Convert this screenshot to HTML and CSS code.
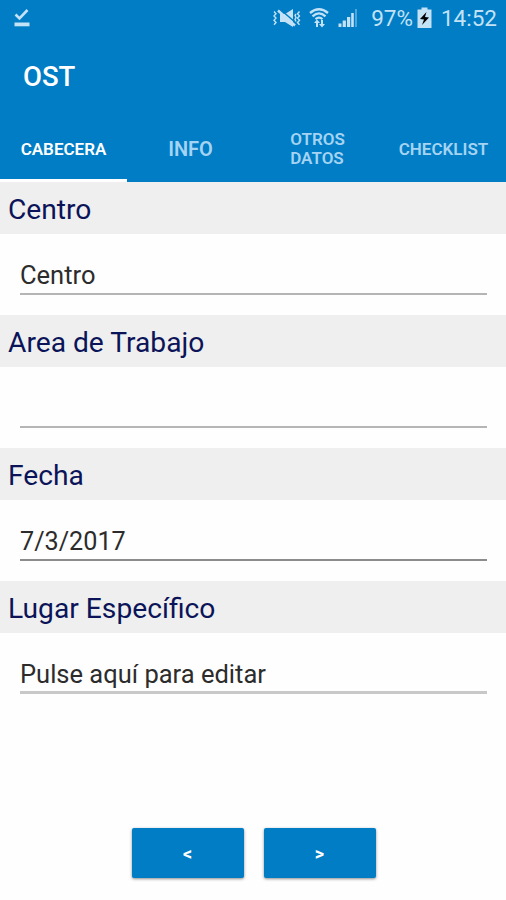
FILE: index.html
```html
<!DOCTYPE html>
<html lang="es">
<head>
  <meta charset="UTF-8">
  <title>OST</title>
  <link rel="stylesheet" href="styles.css">
</head>
<body>
  <header>
    <div class="status-bar">
      <svg class="icon-done" width="16" height="18" viewBox="0 0 16 18">
        <path d="M1.5 5.500 L5.5 9.500 L13.5 1" fill="none" stroke="currentColor" stroke-width="2.6"/>
        <rect x="0.5" y="13.5" width="15" height="3.8" fill="currentColor"/>
      </svg>
      <div class="status-icons">
        <svg class="icon-mute" width="28" height="20" viewBox="0 0 28 20">
          <path d="M7 6 H12 L20 1 V19 L12 14 H7 Z" fill="currentColor"/>
          <path d="M8 2 L23 15" stroke="#007dc5" stroke-width="1.6"/>
          <path d="M5 2.500 L22 17.500" stroke="currentColor" stroke-width="2.4"/>
          <path d="M1 3.5 l2 2.2 -2 2.2 2 2.2 -2 2.2 2 2.2 -2 2.2 M26.500 3.500 l-2 2.200 2 2.200 -2 2.200 2 2.200 -2 2.200 2 2.200 M23 6 l-1 1.500 1 2 -1 2 1 2" fill="none" stroke="currentColor" stroke-width="1.4"/>
        </svg>
        <svg class="icon-wifi" width="20" height="20" viewBox="0 0 20 20">
          <g fill="none" stroke="currentColor" stroke-width="2.3">
            <path d="M1 5 Q10 -2.500 19 5"/>
            <path d="M3.500 8.300 Q10 2.500 16.500 8.300"/>
            <path d="M6.500 11.200 Q10 8 13.500 11.200"/>
          </g>
          <path d="M8 11.500 L11 15 H9 V19 H7 V15 H5 Z M13 19.500 L10 16 H12 V12 H14 V16 H16 Z" fill="currentColor"/>
        </svg>
        <svg class="icon-signal" width="20" height="20" viewBox="0 0 20 20">
          <path d="M0.500 15.500 h3 v3.500 h-3 Z M4.700 12.500 h3.200 v6.500 h-3.200 Z M9 9 h3.200 v10 h-3.200 Z M13.200 5 h2.600 v14 h-2.600 Z" fill="currentColor"/>
          <path d="M17 1 h2 v18 h-2 Z" fill="currentColor" opacity="0.4"/>
        </svg>
        <span class="battery-text">97%</span>
        <svg class="icon-battery" width="15" height="22" viewBox="0 0 15 22">
          <path d="M4.500 0.500 h6 v2 h4 v18.500 h-14 v-18.500 h4 Z" fill="currentColor"/>
          <path d="M9.500 5 L3 12 L7 12.500 L5 18 L12 10.500 L8 10 Z" fill="#000"/>
        </svg>
        <span class="clock">14:52</span>
      </div>
    </div>
    <h1>OST</h1>
    <nav class="tabs">
      <a class="tab active">CABECERA</a>
      <a class="tab tab-info">INFO</a>
      <a class="tab">OTROS<br>DATOS</a>
      <a class="tab">CHECKLIST</a>
    </nav>
  </header>

  <main>
    <section>
      <h2>Centro</h2>
      <div class="field">Centro</div>
    </section>
    <section>
      <h2>Area de Trabajo</h2>
      <div class="field"></div>
    </section>
    <section>
      <h2>Fecha</h2>
      <div class="field field-date">7/3/2017</div>
    </section>
    <section>
      <h2>Lugar Específico</h2>
      <div class="field field-edit">Pulse aquí para editar</div>
    </section>
  </main>

  <div class="buttons">
    <button>&lt;</button>
    <button>&gt;</button>
  </div>
</body>
</html>
```
FILE: styles.css
```css
* {
  box-sizing: border-box;
}

body {
  margin: 0;
  height: 900px;
  display: flex;
  flex-direction: column;
  background: #fefefe;
  font-family: Roboto, sans-serif;
  overflow: hidden;
}

header {
  height: 182px;
  display: flex;
  flex-direction: column;
  background: #007dc5;
  color: white;
}

.status-bar {
  display: flex;
  justify-content: space-between;
  height: 36px;
  padding: 0 9px 0 14px;
  color: #c3e2f6;
}

.icon-done {
  margin-top: 9px;
}

.status-icons {
  display: flex;
  align-items: center;
  font-size: 22.5px;
}

.icon-wifi {
  margin-left: 8px;
}

.icon-signal {
  margin-left: 9px;
}

.battery-text {
  margin-left: 13px;
}

.icon-battery {
  margin: 0 9px 0 4px;
}

h1 {
  margin: 0;
  padding-left: 23px;
  height: 80px;
  line-height: 82px;
  font-size: 27.5px;
  font-weight: 500;
}

.tabs {
  display: grid;
  grid-template-columns: 127px 127px 127px 125px;
  height: 66px;
}

.tab {
  display: flex;
  align-items: center;
  justify-content: center;
  padding-top: 3px;
  border-bottom: 3px solid transparent;
  color: #a5d3f2;
  font-size: 17px;
  line-height: 19px;
  font-weight: 600;
}

.tab.active {
  color: white;
  border-color: white;
}

.tab-info {
  font-size: 20px;
}

section {
  height: 133px;
}

h2 {
  margin: 0;
  height: 52px;
  padding-left: 8px;
  line-height: 55px;
  background: #efefef;
  color: #0b1458;
  font-size: 28.2px;
  font-weight: 400;
}

.field {
  height: 61px;
  margin: 0 19px 0 20px;
  padding-top: 22px;
  line-height: 39px;
  border-bottom: 2px solid #b5b5b5;
  color: #2c2c2c;
  font-size: 25.5px;
}

.field-date {
  border-color: #8c8c8c;
  font-size: 25.2px;
}

.field-edit {
  border-bottom: 3px solid #c8c8c8;
}

.buttons {
  display: flex;
  justify-content: center;
  gap: 20px;
  margin: 114px 0 0 1px;
}

button {
  width: 112px;
  height: 50px;
  padding: 0;
  border: none;
  border-radius: 2px;
  background: #007dc5;
  box-shadow: 0 1px 3px rgba(0, 0, 0, 0.45);
  color: white;
  font-family: Roboto, sans-serif;
  font-size: 18px;
  font-weight: 700;
}
```
